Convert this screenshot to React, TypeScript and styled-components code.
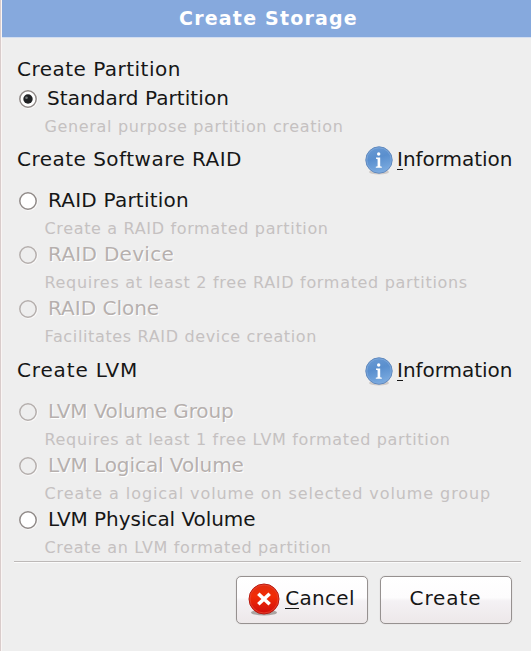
import React from "react";
import styled, { createGlobalStyle } from "styled-components";

const GlobalStyle = createGlobalStyle`
  body {
    margin: 0;
    background: #eeeeee;
    font-family: "DejaVu Sans", sans-serif;
    font-size: 20px;
    color: #161616;
  }
`;

const Dialog = styled.main`
  box-sizing: border-box;
  width: 531px;
  height: 651px;
  overflow: hidden;
  display: flex;
  flex-direction: column;
  background: #eeeeee;
  border-left: 1px solid #d9cccb;
  box-shadow: inset 1px 0 0 #faf5f4;
`;

const TitleBar = styled.header`
  height: 37px;
  flex: none;
  margin-left: 1px;
  padding-left: 4px;
  background: #86a9dd;
  box-shadow: 0 1px 0 #d3def0;
  color: #ffffff;
  font-size: 19px;
  font-weight: bold;
  line-height: 36px;
  text-align: center;
  letter-spacing: 1.2px;
`;

const Content = styled.div`
  display: flex;
  flex-direction: column;
  gap: 9px;
  padding: 20px 18px 0 16px;
  height: 504px;
  box-sizing: border-box;
  flex: none;
`;

const Section = styled.section`
  display: flex;
  flex-direction: column;
  gap: 16px;

  &:first-child {
    gap: 4px;
    margin-bottom: -1px;
  }
`;

const SectionHeader = styled.div`
  display: flex;
  justify-content: space-between;
  height: 24px;
  line-height: 24px;
  white-space: nowrap;
`;

const Choices = styled.div`
  display: flex;
  flex-direction: column;
`;

const Text = styled.span<{ $spacing: number }>`
  letter-spacing: ${(p) => p.$spacing}px;
  white-space: nowrap;
`;

const InfoLink = styled.a`
  display: flex;
  gap: 3px;
  width: 149px;

  svg {
    flex: none;
    margin-top: -2px;
  }
`;

const Mnemonic = styled.span`
  box-shadow: 0 1px 0 #161616;
  display: inline-block;
  height: 22px;
  line-height: 24px;
`;

const Option = styled.label<{ $disabled?: boolean; $indent: number }>`
  display: grid;
  grid-template-columns: ${(p) => p.$indent}px 1fr;
  grid-template-rows: 27px 27px;
  line-height: 27px;
  color: ${(p) => (p.$disabled ? "#b6b0ae" : "#161616")};
  text-shadow: ${(p) => (p.$disabled ? "1px 1px 0 #ffffff" : "none")};

  svg {
    margin: 3.5px 0 0 0.5px;
  }
`;

const Description = styled.small`
  grid-column: 1 / -1;
  padding: 3px 0 0 27.5px;
  font-size: 16px;
  line-height: 23px;
  color: #c5c1c1;
  text-shadow: none;
  white-space: nowrap;
`;

const Separator = styled.hr`
  flex: none;
  width: 507px;
  height: 1px;
  margin: 20px 0 0 13px;
  border: 0;
  background: #bdb9b8;
  box-shadow: 0 1px 0 #fbfbfb;
`;

const Actions = styled.footer`
  display: flex;
  justify-content: flex-end;
  gap: 12px;
  padding: 14px 19px 0 0;
`;

const Button = styled.button`
  box-sizing: border-box;
  display: flex;
  align-items: center;
  justify-content: center;
  gap: 5px;
  width: 132px;
  height: 48px;
  padding: 0 1px 2px 0;
  border: 1.5px solid #969190;
  border-radius: 5px;
  background: linear-gradient(#ffffff 0%, #fdfcfd 45%, #f4f1f4 52%, #ede8e9 100%);
  box-shadow: 0 0 1px #bdb8b7;
  color: #161616;
  font: 20px "DejaVu Sans", sans-serif;
  line-height: 24px;

  > span {
    padding-bottom: 2px;
  }
`;

function Radio({ checked, disabled }: { checked?: boolean; disabled?: boolean }) {
  return (
    <svg width="20" height="20" viewBox="0 0 20 20">
      <circle cx="10.5" cy="10.6" r="8.8" fill="none" stroke="#fbfafa" strokeWidth="1.2" />
      <circle cx="10" cy="10" r="8.2" fill={disabled ? "#eeeeee" : "#ffffff"} stroke={disabled ? "#b5afad" : "#918b89"} strokeWidth="1.5" />
      {checked && (
        <>
          <circle cx="10" cy="10" r="4.7" fill="#202224" />
          <circle cx="8.5" cy="8.7" r="1.3" fill="#777b7c" />
        </>
      )}
    </svg>
  );
}

function InfoIcon() {
  return (
    <svg width="30" height="31" viewBox="0 0 30 31">
      <defs>
        <linearGradient id="infoFill" x1="0" y1="0" x2="0.3" y2="1">
          <stop offset="0" stopColor="#6c9bd3" />
          <stop offset="0.5" stopColor="#5a8fce" />
          <stop offset="1" stopColor="#78a9df" />
        </linearGradient>
      </defs>
      <ellipse cx="15" cy="27" rx="10" ry="2.6" fill="#cfcac8" />
      <circle cx="15" cy="15" r="13.2" fill="url(#infoFill)" stroke="#6189bd" strokeWidth="1" />
      <circle cx="15" cy="15" r="12.2" fill="none" stroke="#7ea8dc" strokeWidth="0.8" />
      <circle cx="14.7" cy="9" r="1.7" fill="#ffffff" />
      <path d="M12 12.6h4.2v8.7l1.6.4v1.1h-6v-1.1l1.8-.4v-7l-1.6-.5z" fill="#ffffff" />
    </svg>
  );
}

function CancelIcon() {
  return (
    <svg width="32" height="33" viewBox="0 0 32 33">
      <defs>
        <linearGradient id="cancelFill" x1="0" y1="0" x2="0" y2="1">
          <stop offset="0" stopColor="#e02c10" />
          <stop offset="0.4" stopColor="#f22c05" />
          <stop offset="1" stopColor="#cf0c0c" />
        </linearGradient>
      </defs>
      <ellipse cx="16" cy="29.5" rx="13" ry="3" fill="#aaa4a2" />
      <circle cx="16" cy="16" r="15" fill="url(#cancelFill)" stroke="#b51a12" strokeWidth="1" />
      <circle cx="16" cy="16" r="14" fill="none" stroke="#ea4630" strokeWidth="0.8" />
      <path d="M10.3 10.7 21.7 21.3M21.7 10.7 10.3 21.3" stroke="#ffffff" strokeWidth="3.6" />
    </svg>
  );
}

function Information() {
  return (
    <InfoLink>
      <InfoIcon />
      <Text $spacing={-0.03}>
        <Mnemonic>I</Mnemonic>nformation
      </Text>
    </InfoLink>
  );
}

interface Choice {
  label: string;
  spacing: number;
  hint: string;
  hintSpacing: number;
  indent?: number;
  checked?: boolean;
  disabled?: boolean;
}

interface Group {
  title: string;
  spacing: number;
  info: boolean;
  choices: Choice[];
}

const groups: Group[] = [
  {
    title: "Create Partition", spacing: 0.48, info: false,
    choices: [
      { label: "Standard Partition", spacing: 0.07, hint: "General purpose partition creation", hintSpacing: 0.66, indent: 30, checked: true },
    ],
  },
  {
    title: "Create Software RAID", spacing: 0.48, info: true,
    choices: [
      { label: "RAID Partition", spacing: 0.22, hint: "Create a RAID formated partition", hintSpacing: 0.66 },
      { label: "RAID Device", spacing: 0.3, hint: "Requires at least 2 free RAID formated partitions", hintSpacing: 0.69, disabled: true },
      { label: "RAID Clone", spacing: 0, hint: "Facilitates RAID device creation", hintSpacing: 0.65, disabled: true },
    ],
  },
  {
    title: "Create LVM", spacing: 0.85, info: true,
    choices: [
      { label: "LVM Volume Group", spacing: -0.15, hint: "Requires at least 1 free LVM formated partition", hintSpacing: 0.67, disabled: true },
      { label: "LVM Logical Volume", spacing: -0.07, hint: "Create a logical volume on selected volume group", hintSpacing: 0.91, disabled: true },
      { label: "LVM Physical Volume", spacing: -0.04, hint: "Create an LVM formated partition", hintSpacing: 0.64 },
    ],
  },
];

export default function App() {
  return (
    <Dialog>
      <GlobalStyle />
      <TitleBar>Create Storage</TitleBar>
      <Content>
        {groups.map((g) => (
          <Section key={g.title}>
            <SectionHeader>
              <Text $spacing={g.spacing}>{g.title}</Text>
              {g.info && <Information />}
            </SectionHeader>
            <Choices>
              {g.choices.map((c) => (
                <Option key={c.label} $disabled={c.disabled} $indent={c.indent ?? 31}>
                  <Radio checked={c.checked} disabled={c.disabled} />
                  <Text $spacing={c.spacing}>{c.label}</Text>
                  <Description>
                    <Text $spacing={c.hintSpacing}>{c.hint}</Text>
                  </Description>
                </Option>
              ))}
            </Choices>
          </Section>
        ))}
      </Content>
      <Separator />
      <Actions>
        <Button>
          <CancelIcon />
          <Text $spacing={0.3}>
            <Mnemonic>C</Mnemonic>ancel
          </Text>
        </Button>
        <Button>
          <Text $spacing={0.9}>Create</Text>
        </Button>
      </Actions>
    </Dialog>
  );
}
